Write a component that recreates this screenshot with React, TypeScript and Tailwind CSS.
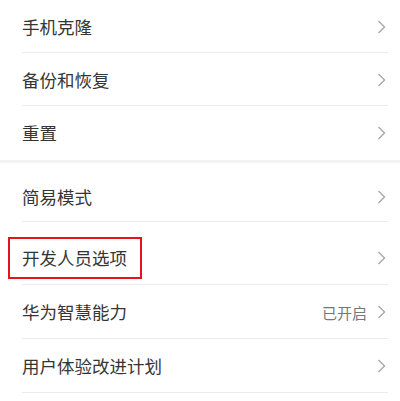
const Chevron = () => (
  <svg width="9" height="14" viewBox="0 0 9 14" className="shrink-0">
    <polyline points="1.5,1 7.5,7 1.5,13" fill="none" stroke="#a8a8a8" strokeWidth="1.4" />
  </svg>
)

type Row = { label: string; h: string; value?: string; marked?: boolean }

const ROWS: Row[][] = [
  [
    { label: "手机克隆", h: "h-[53px]" },
    { label: "备份和恢复", h: "h-[53px]" },
    { label: "重置", h: "h-[54px]" },
  ],
  [
    { label: "简易模式", h: "h-[59px] pt-[9px]" },
    { label: "开发人员选项", h: "h-[63px] pt-[9px]", marked: true },
    { label: "华为智慧能力", h: "h-[54px]", value: "已开启" },
    { label: "用户体验改进计划", h: "h-[54px]" },
  ],
]

export default function App() {
  return (
    <div className="w-[400px] h-[401px] overflow-hidden bg-white font-['Noto_Sans_CJK_SC','Noto_Sans',sans-serif] text-[#353535]">
      {ROWS.map((group, gi) => (
        <div key={gi} className={gi > 0 ? "border-t-[3px] border-[#f3f3f3]" : ""}>
          {group.map((r, i) => (
            <div key={r.label} className={`${r.h} flex items-center pr-[14px] ${r.marked ? "pl-[8px]" : "pl-[22px]"} relative`}>
              {r.marked ? (
                <span className="border-2 border-[#e3141b] h-[42px] w-[134px] pl-[12px] flex items-center text-[17.5px] leading-none">
                  {r.label}
                </span>
              ) : (
                <span className="text-[17.5px] leading-none">{r.label}</span>
              )}
              <div className="ml-auto flex items-center gap-[10px]">
                {r.value && <span className="text-[15px] text-[#777] leading-none">{r.value}</span>}
                <Chevron />
              </div>
              {(i < group.length - 1 || gi === ROWS.length - 1) && (
                <div className="absolute bottom-0 left-[22px] right-[12px] h-px bg-[#ebebeb]" />
              )}
            </div>
          ))}
        </div>
      ))}
    </div>
  )
}
